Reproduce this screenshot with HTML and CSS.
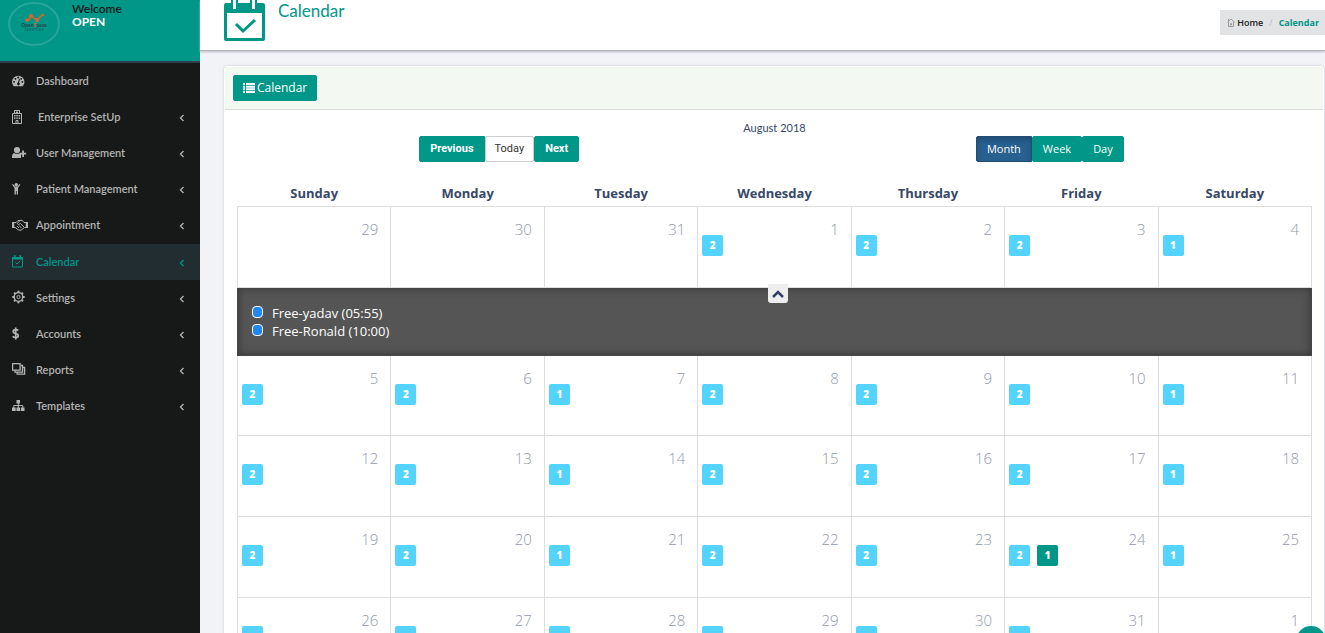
FILE: index.html
```html
<!DOCTYPE html>
<html lang="en">
<head>
<meta charset="utf-8">
<title>Calendar</title>
<link rel="stylesheet" href="styles.css">
</head>
<body>
<div class="app">
  <aside class="sidebar">
    <div class="user">
      <svg class="avatar" viewBox="0 0 52 44" width="52" height="44" aria-hidden="true">
        <ellipse cx="26" cy="22" rx="25" ry="21" fill="none" stroke="#26a69a" stroke-width="2"/>
        <path d="M20 19L23 14L29 18L35 12" fill="none" stroke="#e4632a" stroke-width="1.500"/>
        <g fill="#e4632a"><circle cx="19" cy="18" r="1.800"/><circle cx="23" cy="14" r="2"/><circle cx="29" cy="18" r="2"/><circle cx="35" cy="13" r="1.2"/></g>
        <text x="26" y="25" class="logo-name">Open<tspan fill="#e4632a">S</tspan>pace</text>
        <text x="26" y="29" class="logo-sub">S E R V I C E S</text>
      </svg>
      <div class="user-text"><span class="welcome">Welcome</span><span class="name">OPEN</span></div>
    </div>
    <nav class="menu">
      <a href="#"><svg class="ico" viewBox="0 0 18 18"><path fill="currentColor" fill-rule="evenodd" d="M2 15A7 7 0 1 1 12 15ZM7 4a1 1 0 1 0 .01 0ZM3.800 5.500a1 1 0 1 0 .01 0ZM10.300 5.500a1 1 0 1 0 .01 0ZM2.300 9a1 1 0 1 0 .01 0ZM11.700 9a1 1 0 1 0 .01 0ZM8 6.500L6.500 11a1.500 1.500 0 1 0 1.500 0L9 6.800Z"/></svg><span>Dashboard</span></a>
      <a href="#"><svg class="ico" viewBox="0 0 16 16"><path fill="none" stroke="currentColor" d="M.5 14.500V4.500H9.500V14.500ZM2.500 4V1.500H7.500V4M4 14V11.500H6V14M5 2v3M3.800 3.500h2.400"/><path fill="currentColor" d="M2 6h1.500v1.500H2zM4.300 6h1.500v1.500H4.300zM6.600 6h1.500v1.500H6.600zM2 8.500h1.500V10H2zM4.300 8.500h1.500V10H4.300zM6.600 8.500h1.500V10H6.600z"/></svg><span class="indent">Enterprise SetUp</span><svg class="chev" viewBox="0 0 6 8"><path d="M4.500 1L1.500 4L4.500 7"/></svg></a>
      <a href="#"><svg class="ico" viewBox="0 0 16 16"><path fill="currentColor" d="M5 2a3 3 0 0 1 0 6.200A3 3 0 0 1 5 2ZM2 8q3 2 6 0l1 1v4H0V11q0-2 2-3ZM10.200 5.500h1.800v2.200h2.200v1.800H12v2.500h-1.800V9.500H8V7.700h2.200Z"/></svg><span>User Management</span><svg class="chev" viewBox="0 0 6 8"><path d="M4.500 1L1.500 4L4.500 7"/></svg></a>
      <a href="#"><svg class="ico" viewBox="0 0 16 16"><path fill="currentColor" d="M4.300 2a1.700 1.700 0 0 1 0 3.500A1.700 1.700 0 0 1 4.300 2ZM0 3.500L1 3L3.300 5.700H5.300L7.500 3L8.400 3.600L6 7V13.500H4.700V10H3.900V13.500H2.500V7Z"/></svg><span>Patient Management</span><svg class="chev" viewBox="0 0 6 8"><path d="M4.500 1L1.500 4L4.500 7"/></svg></a>
      <a href="#"><svg class="ico" viewBox="0 0 16 16"><path fill="currentColor" d="M0 5h2.200v6H0zM13.800 5H16v6h-2.200z"/><path fill="none" stroke="currentColor" d="M2 5.500h2l2-2h2l2-.3L12 5.500h2M2 10.500h1.200L6.500 13l2.500.2L12.500 10.500H14M8 3.500L5.200 6.500Q6 8.500 8.500 6.500L12 10M5 9l2 2M7 8.500l2.500 2.500"/></svg><span>Appointment</span><svg class="chev" viewBox="0 0 6 8"><path d="M4.500 1L1.500 4L4.500 7"/></svg></a>
      <a href="#" class="active"><svg class="ico" viewBox="0 0 16 16"><path fill="none" stroke="currentColor" d="M.5 3.500h10v9.500h-10zM3.500 8.500l1.500 1.500L8 7"/><path fill="currentColor" d="M0 3h11v2.500H0zM2 1h1.500v2H2zM7.500 1H9v2H7.500z"/></svg><span>Calendar</span><svg class="chev" viewBox="0 0 6 8"><path d="M4.500 1L1.500 4L4.500 7"/></svg></a>
      <a href="#"><svg class="ico" viewBox="0 0 16 16"><circle cx="6.500" cy="7" r="4.300" fill="none" stroke="currentColor" stroke-width="1.300"/><circle cx="6.500" cy="7" r="1.600" fill="none" stroke="currentColor"/><path stroke="currentColor" stroke-width="2" d="M6.500 .8V3M6.500 11v2.200M.3 7h2.200M10.500 7h2.200M2.100 2.600l1.500 1.500M9.400 9.900l1.500 1.500M2.100 11.400l1.500-1.500M9.400 4.100l1.500-1.500"/></svg><span>Settings</span><svg class="chev" viewBox="0 0 6 8"><path d="M4.500 1L1.500 4L4.500 7"/></svg></a>
      <a href="#"><svg class="ico" viewBox="0 0 16 16"><path fill="none" stroke="currentColor" stroke-width="1.700" d="M6.200 4.600Q5.500 3.600 3.600 3.600Q1.200 3.800 1.200 5.500Q1.200 7 3.600 7.500Q6.300 8 6.300 9.700Q6.200 11.500 3.600 11.500Q1.500 11.500.7 10.200M3.700 1.500V13.500"/></svg><span>Accounts</span><svg class="chev" viewBox="0 0 6 8"><path d="M4.500 1L1.500 4L4.500 7"/></svg></a>
      <a href="#"><svg class="ico" viewBox="0 0 16 16"><path fill="none" stroke="currentColor" stroke-width="1.300" d="M.6 1.600h7.500v6.500H.6zM3 8.500v1.600h7.500V3.500H9M5.200 10.500v1.700h7.400V5.500H11"/></svg><span>Reports</span><svg class="chev" viewBox="0 0 6 8"><path d="M4.500 1L1.500 4L4.500 7"/></svg></a>
      <a href="#"><svg class="ico" viewBox="0 0 16 16"><path fill="currentColor" d="M4.500 2h3.500v3.500H4.500zM0 9.500h3.700V13H0zM4.500 9.500h3.500V13H4.500zM8.800 9.500h3.700V13H8.800z"/><path fill="none" stroke="currentColor" d="M6.300 5v5M1.800 10V7.500h9V10"/></svg><span>Templates</span><svg class="chev" viewBox="0 0 6 8"><path d="M4.500 1L1.500 4L4.500 7"/></svg></a>
    </nav>
  </aside>

  <main class="main">
    <header class="page-head">
      <svg class="head-icon" viewBox="0 0 42 46" width="42" height="46" aria-hidden="true">
        <path fill="#009688" fill-rule="evenodd" d="M2 8H39Q41 8 41 10V44Q41 46 39 46H2Q0 46 0 44V10Q0 8 2 8ZM3 18V43H38V18Z"/>
        <path fill="#009688" d="M7 0H14V14H7ZM26 0H33V14H26Z"/>
        <path fill="#fff" d="M9 0H12V14H9ZM28 0H31V14H28Z"/>
        <path fill="none" stroke="#009688" stroke-width="3" d="M12 29L19 36L31 25"/>
      </svg>
      <h1>Calendar</h1>
      <nav class="crumbs">
        <svg viewBox="0 0 8 9" width="8" height="9" aria-hidden="true"><path fill="none" stroke="#999" d="M.5 4L4 1L7.500 4M1.500 3.500V8.500H6.500V3.500M3.500 5.500h1v1.500h-1zM1.500 1v2"/></svg>
        <a href="#">Home</a><span class="sep">/</span><a href="#" class="current">Calendar</a>
      </nav>
    </header>

    <section class="panel">
      <div class="panel-head">
        <button class="btn list-btn" type="button"><svg viewBox="0 0 12 10" width="12" height="10" aria-hidden="true"><path fill="#fff" d="M0 0h2v2H0zM3 0h9v2H3zM0 2.700h2v2H0zM3 2.700h9v2H3zM0 5.300h2v2H0zM3 5.300h9v2H3zM0 8h2v2H0zM3 8h9v2H3z"/></svg>Calendar</button>
      </div>
      <div class="panel-body">
        <div class="toolbar">
          <div class="group nav-group"><button class="btn" type="button">Previous</button><button class="btn plain" type="button">Today</button><button class="btn" type="button">Next</button></div>
          <h2>August 2018</h2>
          <div class="group"><button class="btn pressed" type="button">Month</button><button class="btn" type="button">Week</button><button class="btn" type="button">Day</button></div>
        </div>
        <table class="month">
          <thead><tr><th>Sunday</th><th>Monday</th><th>Tuesday</th><th>Wednesday</th><th>Thursday</th><th>Friday</th><th>Saturday</th></tr></thead>
          <tbody>
            <tr>
              <td><div class="day"><span class="num">29</span></div></td>
              <td><div class="day"><span class="num">30</span></div></td>
              <td><div class="day"><span class="num">31</span></div></td>
              <td><div class="day"><span class="tag">2</span><span class="num">1</span></div></td>
              <td><div class="day"><span class="tag">2</span><span class="num">2</span></div></td>
              <td><div class="day"><span class="tag">2</span><span class="num">3</span></div></td>
              <td><div class="day"><span class="tag">1</span><span class="num">4</span></div></td>
            </tr>
            <tr>
              <td class="slide" colspan="7">
                <button class="fold" type="button" aria-label="Collapse"><svg viewBox="0 0 12 8" width="12" height="8"><path fill="none" stroke="#34406b" stroke-width="2.500" d="M1 7L6 2L11 7"/></svg></button>
                <ul class="events">
                  <li><a href="#">Free-yadav (05:55)</a></li>
                  <li><a href="#">Free-Ronald (10:00)</a></li>
                </ul>
              </td>
            </tr>
            <tr class="after-slide">
              <td><div class="day"><span class="tag">2</span><span class="num">5</span></div></td>
              <td><div class="day"><span class="tag">2</span><span class="num">6</span></div></td>
              <td><div class="day"><span class="tag">1</span><span class="num">7</span></div></td>
              <td><div class="day"><span class="tag">2</span><span class="num">8</span></div></td>
              <td><div class="day"><span class="tag">2</span><span class="num">9</span></div></td>
              <td><div class="day"><span class="tag">2</span><span class="num">10</span></div></td>
              <td><div class="day"><span class="tag">1</span><span class="num">11</span></div></td>
            </tr>
            <tr>
              <td><div class="day"><span class="tag">2</span><span class="num">12</span></div></td>
              <td><div class="day"><span class="tag">2</span><span class="num">13</span></div></td>
              <td><div class="day"><span class="tag">1</span><span class="num">14</span></div></td>
              <td><div class="day"><span class="tag">2</span><span class="num">15</span></div></td>
              <td><div class="day"><span class="tag">2</span><span class="num">16</span></div></td>
              <td><div class="day"><span class="tag">2</span><span class="num">17</span></div></td>
              <td><div class="day"><span class="tag">1</span><span class="num">18</span></div></td>
            </tr>
            <tr>
              <td><div class="day"><span class="tag">2</span><span class="num">19</span></div></td>
              <td><div class="day"><span class="tag">2</span><span class="num">20</span></div></td>
              <td><div class="day"><span class="tag">1</span><span class="num">21</span></div></td>
              <td><div class="day"><span class="tag">2</span><span class="num">22</span></div></td>
              <td><div class="day"><span class="tag">2</span><span class="num">23</span></div></td>
              <td><div class="day"><span class="tag">2</span><span class="tag green">1</span><span class="num">24</span></div></td>
              <td><div class="day"><span class="tag">1</span><span class="num">25</span></div></td>
            </tr>
            <tr>
              <td><div class="day"><span class="tag"></span><span class="num">26</span></div></td>
              <td><div class="day"><span class="tag"></span><span class="num">27</span></div></td>
              <td><div class="day"><span class="tag"></span><span class="num">28</span></div></td>
              <td><div class="day"><span class="tag"></span><span class="num">29</span></div></td>
              <td><div class="day"><span class="tag"></span><span class="num">30</span></div></td>
              <td><div class="day"><span class="tag"></span><span class="num">31</span></div></td>
              <td><div class="day"><span class="num">1</span></div></td>
            </tr>
          </tbody>
        </table>
      </div>
    </section>
  </main>
</div>
<button class="to-top" type="button" aria-label="Back to top"></button>
</body>
</html>
```
FILE: styles.css
```css
* { box-sizing: border-box; }
body {
  margin: 0;
  height: 100vh;
  overflow: hidden;
  background: #f1f3f7;
  color: #374767;
  font: 13px/18px "Open Sans", "Noto Sans", sans-serif;
}
a { color: inherit; text-decoration: none; }
button { font-family: inherit; cursor: pointer; }
.app { display: flex; height: 100vh; overflow: hidden; }

.sidebar {
  flex: 0 0 200px;
  background: #171918;
  color: #b4b4b4;
  font-family: Lato, sans-serif;
}
.user {
  display: flex;
  gap: 12px;
  height: 63px;
  padding: 2px 8px 0;
  background: #009688;
  border-bottom: 2px solid #2c3e50;
}
.avatar { flex: none; }
.logo-name { font: bold 5px Lato, sans-serif; fill: #24444a; text-anchor: middle; }
.logo-sub { font: 3px Lato, sans-serif; fill: #24444a; text-anchor: middle; }
.user-text { display: flex; flex-direction: column; font-size: 12px; line-height: 13px; font-weight: 700; }
.welcome { color: #0c1a1a; font-weight: 600; }
.name { color: #fff; }
.menu { display: flex; flex-direction: column; }
.menu a {
  display: flex;
  align-items: center;
  height: 36px;
  padding: 0 15px 0 12px;
  font-size: 11px;
  font-weight: 600;
}
.menu .active { margin-top: 1px; background: #222d32; color: #009688; }
.ico { width: 16px; height: 16px; margin-right: 8px; }
.indent { padding-left: 2px; }
.chev { width: 6px; height: 8px; margin: 2px 0 0 auto; fill: none; stroke: currentColor; stroke-width: 1.3; }

.main { flex: 1; min-width: 0; }
.page-head {
  display: flex;
  align-items: flex-start;
  height: 51px;
  padding-left: 24px;
  background: #fff;
  border-bottom: 1px solid #b3b5bb;
  box-shadow: 0 1px 2px #b9bbc2;
}
.head-icon { margin-top: -5px; }
h1 { margin: 0 0 0 12px; color: #009688; font: 17px/22px Lato, sans-serif; }
.crumbs {
  display: flex;
  align-items: center;
  height: 25px;
  margin: 10px 0 0 auto;
  padding: 0 6px 0 7px;
  background: #e1e3e5;
  color: #222;
  font-size: 9px;
  font-weight: 600;
}
.crumbs svg { margin-right: 2px; }
.sep { margin: 0 6px; color: #bbb; font-weight: 400; }
.current { color: #009688; font-weight: 700; }

.panel {
  margin: 15px 1px 0 24px;
  background: #fff;
  border: 1px solid #fff;
  border-radius: 3px;
  box-shadow: 0 0 3px #c8cad0;
}
.panel-head { padding: 8px; height: 43px; background: #f3f8f3; border-bottom: 1px solid #d5ddd5; }
.btn {
  height: 26px;
  padding: 0 10px;
  background: #009688;
  border: 1px solid #009688;
  border-radius: 2px;
  color: #fff;
  font-size: 11px;
  line-height: 16px;
}
.list-btn { display: flex; align-items: center; gap: 2px; padding: 0 9px; font-size: 12px; }
.panel-body { padding: 11px 11px 0 12px; }
.toolbar { display: grid; grid-template-columns: 1fr 1fr 1fr; justify-items: center; }
.group { display: flex; margin-top: 15px; }
.toolbar .group:first-child { margin-left: 166px; }
.toolbar .group:last-child { margin-right: 166px; }
.toolbar .group .btn:first-child { border-radius: 2px 0 0 2px; }
.nav-group { font-family: Roboto, sans-serif; }
.nav-group .btn { font-weight: 700; }
.nav-group .plain { padding: 0 9px; background: #fff; border-color: #ccc; color: #333; font-weight: 400; }
.group .pressed { background: #286090; border-color: #204d74; box-shadow: inset 0 3px 5px #204d74; }
h2 { margin: 0; font: 11px/14px Lato, sans-serif; }

.month { width: 100%; margin-top: 20px; border-collapse: collapse; table-layout: fixed; }
th { padding: 2px 0 4px; font-size: 13px; line-height: 18px; }
td { padding: 0; border: 1px solid #ddd; }
.day { display: flex; gap: 7px; height: 80px; padding: 13px 12px 0 4px; }
.after-slide .day { height: 79px; }
.num { margin-left: auto; color: #9299ab; font-size: 15px; line-height: 18px; font-weight: 300; }
.tag {
  width: 21px;
  height: 21px;
  margin-top: 15px;
  border-radius: 2px;
  background: #54d4fc;
  color: #fff;
  font-size: 10px;
  font-weight: 800;
  line-height: 20px;
  text-align: center;
}
.green { background: #009688; }
.slide {
  position: relative;
  height: 68px;
  border-color: #484545;
  background: #555;
  box-shadow: inset 0 0 8px #333;
}
.fold {
  position: absolute;
  top: -4px;
  left: 50%;
  width: 20px;
  height: 19px;
  margin-left: -7px;
  padding: 0;
  border: 0;
  border-radius: 0 0 3px 3px;
  background: #eee;
  line-height: 0;
}
.events { margin: 0; padding: 0 0 0 14px; list-style: none; color: #fff; }
.events li { display: flex; gap: 9px; }
.events li::before {
  content: "";
  width: 9px;
  height: 10px;
  margin-top: 2px;
  border: 1px solid #fff;
  border-radius: 4px;
  background: #1e88f0;
}
.to-top {
  position: fixed;
  right: -1px;
  bottom: -23px;
  width: 30px;
  height: 30px;
  border: 0;
  border-radius: 50%;
  background: #009688;
}
```
